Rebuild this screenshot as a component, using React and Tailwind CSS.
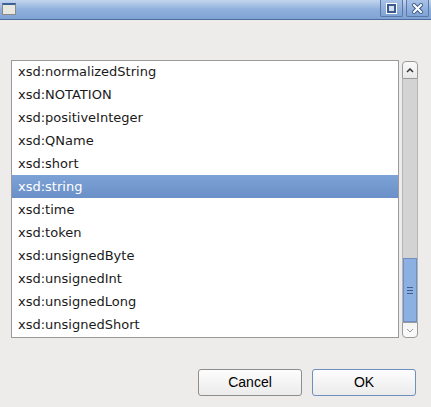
import { useState } from "react";

const ITEMS = [
  "xsd:normalizedString",
  "xsd:NOTATION",
  "xsd:positiveInteger",
  "xsd:QName",
  "xsd:short",
  "xsd:string",
  "xsd:time",
  "xsd:token",
  "xsd:unsignedByte",
  "xsd:unsignedInt",
  "xsd:unsignedLong",
  "xsd:unsignedShort",
];

function TitleBar() {
  return (
    <div className="flex h-[20px] items-start justify-between border-b border-[#4d6c9c] bg-gradient-to-b from-[#c3d5ee] via-[#8fb0dc] to-[#7fa3d4]">
      {/* window icon */}
      <div className="ml-[2px] mt-[3px] h-[12px] w-[14px] border border-[#8a8a8a] border-t-[2px] border-t-[#3d5f96] bg-[#e6e8e0]" />
      <div className="flex gap-[3px] pr-[2px]">
        <button className="grid h-[17px] w-[23px] place-items-center rounded-b-[2px] border border-t-0 border-[#5a78a8] bg-gradient-to-b from-[#a9c2e6] to-[#7ea2d4]">
          <span className="block h-[9px] w-[9px] border-[2px] border-[#3c5a8c] bg-white/60 shadow-[0_0_0_1px_#fff]" />
        </button>
        <button className="grid h-[17px] w-[23px] place-items-center rounded-b-[2px] border border-t-0 border-[#5a78a8] bg-gradient-to-b from-[#a9c2e6] to-[#7ea2d4]">
          <svg width="11" height="11" viewBox="0 0 11 11">
            <path d="M2 2 L9 9 M9 2 L2 9" stroke="#3c5a8c" strokeWidth="4" strokeLinecap="square" />
            <path d="M2 2 L9 9 M9 2 L2 9" stroke="#fff" strokeWidth="2" strokeLinecap="square" />
          </svg>
        </button>
      </div>
    </div>
  );
}

function ScrollBar() {
  return (
    <div className="flex w-[16px] flex-col">
      <div className="grid h-[18px] place-items-center rounded-t-[4px] border border-[#9a9a9a] bg-gradient-to-b from-[#fafafa] to-[#e8e8e8]">
        <svg width="8" height="5" viewBox="0 0 8 5">
          <path d="M1 4 L4 1 L7 4" fill="none" stroke="#333" strokeWidth="1.5" />
        </svg>
      </div>
      <div className="flex flex-1 flex-col border-x border-[#b5b5b5] bg-[#d3d3d3]">
        <div className="flex-1" />
        <div className="flex h-[64px] flex-col items-center justify-center gap-[2px] border border-[#6d8fc2] bg-[#8cb0e2]">
          <span className="block h-px w-[6px] bg-[#3f5f90]" />
          <span className="block h-px w-[6px] bg-[#3f5f90]" />
          <span className="block h-px w-[6px] bg-[#3f5f90]" />
        </div>
      </div>
      <div className="grid h-[16px] place-items-center rounded-b-[4px] border border-[#9a9a9a] bg-gradient-to-b from-[#f4f4f4] to-[#fafafa]">
        <svg width="8" height="5" viewBox="0 0 8 5">
          <path d="M1 1 L4 4 L7 1" fill="none" stroke="#999" strokeWidth="1" />
        </svg>
      </div>
    </div>
  );
}

export default function App() {
  const [selected, setSelected] = useState(5);

  return (
    <div className="flex h-[407px] w-[431px] flex-col bg-[#edecea] font-['DejaVu_Sans',sans-serif] text-[13px] text-[#1a1a1a]">
      <TitleBar />
      <div className="mt-[41px] flex h-[277px] gap-[3px] pl-[11px] pr-[13px]">
        <div className="flex-1 overflow-hidden border border-[#9a9a9a] bg-white -mt-px">
          <div className="-mt-px">
            {ITEMS.map((it, i) => (
              <div
                key={it}
                onClick={() => setSelected(i)}
                className={
                  i === selected
                    ? "flex h-[23px] items-center bg-gradient-to-b from-[#7da2d6] to-[#6a90c8] pl-[6px] text-white"
                    : "flex h-[23px] items-center pl-[6px]"
                }
              >
                {it}
              </div>
            ))}
          </div>
        </div>
        <ScrollBar />
      </div>
      <div className="mt-[31px] flex justify-end gap-[10px] pr-[15px]">
        <button className="h-[27px] w-[104px] rounded-[3px] border border-[#8d8d8d] bg-gradient-to-b from-[#fdfdfd] to-[#ebebeb] font-['Liberation_Sans',sans-serif] text-[14px] text-black">
          Cancel
        </button>
        <button className="h-[27px] w-[104px] rounded-[3px] border border-[#6f8fbf] bg-gradient-to-b from-[#fdfdfd] to-[#ebebeb] font-['Liberation_Sans',sans-serif] text-[14px] text-black">
          OK
        </button>
      </div>
    </div>
  );
}
